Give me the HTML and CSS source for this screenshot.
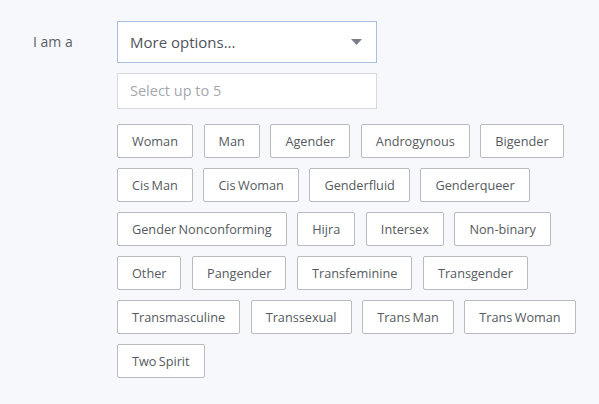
FILE: index.html
```html
<!DOCTYPE html>
<html>
<head>
<meta charset="utf-8">
<link rel="stylesheet" href="styles.css">
</head>
<body>
<div class="row">
  <div class="label">I am a</div>
  <div class="field">
    <div class="select">
      <span>More options...</span>
      <svg class="arrow" width="11" height="6" viewBox="0 0 11 6"><path d="M0 0H11L5.5 6Z" fill="#7a7f87"/></svg>
    </div>
    <div class="search">Select up to 5</div>
    <div class="tags">
      <span class="tag">Woman</span>
      <span class="tag">Man</span>
      <span class="tag">Agender</span>
      <span class="tag">Androgynous</span>
      <span class="tag">Bigender</span>
      <span class="tag">Cis Man</span>
      <span class="tag">Cis Woman</span>
      <span class="tag">Genderfluid</span>
      <span class="tag">Genderqueer</span>
      <span class="tag">Gender Nonconforming</span>
      <span class="tag">Hijra</span>
      <span class="tag">Intersex</span>
      <span class="tag">Non-binary</span>
      <span class="tag">Other</span>
      <span class="tag">Pangender</span>
      <span class="tag">Transfeminine</span>
      <span class="tag">Transgender</span>
      <span class="tag">Transmasculine</span>
      <span class="tag">Transsexual</span>
      <span class="tag">Trans Man</span>
      <span class="tag">Trans Woman</span>
      <span class="tag">Two Spirit</span>
    </div>
  </div>
</div>
</body>
</html>
```
FILE: styles.css
```css
html, body {
  margin: 0;
  background: #f7f8fb;
  font-family: "Open Sans", sans-serif;
  color: #555a60;
}
.row {
  display: flex;
  padding: 21px 0 0 33px;
}
.label {
  width: 84px;
  font-size: 14px;
  line-height: 42px;
  color: #5b6068;
}
.field {
  width: 470px;
}
.select {
  box-sizing: border-box;
  width: 260px;
  height: 42px;
  border: 1px solid #a9bfe0;
  background: #fff;
  display: flex;
  align-items: center;
  justify-content: space-between;
  padding: 0 14px 0 12px;
  font-size: 15px;
  color: #4f545a;
}
.arrow {
  display: block;
}
.search {
  box-sizing: border-box;
  width: 260px;
  height: 36px;
  margin-top: 10px;
  border: 1px solid #d6d9de;
  background: #fff;
  padding: 0 12px;
  font-size: 14.5px;
  line-height: 34px;
  color: #a4a8ae;
}
.tags {
  display: flex;
  flex-wrap: wrap;
  column-gap: 10.6px;
  row-gap: 10px;
  margin-top: 15px;
}
.tag {
  box-sizing: border-box;
  height: 34px;
  border: 1px solid #b8bbbf;
  border-radius: 2px;
  background: #fff;
  padding: 0 14px;
  font-size: 12.7px;
  line-height: 32px;
  color: #555a60;
  white-space: nowrap;
  word-spacing: -1px;
}
```
